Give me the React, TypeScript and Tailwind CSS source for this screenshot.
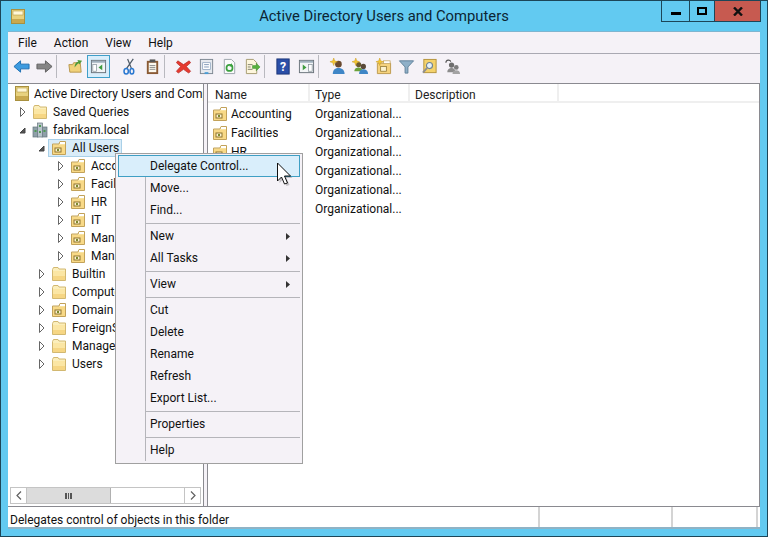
import type { ReactNode } from "react";

function Folder() {
  return (
    <svg width="16" height="16" viewBox="0 0 16 16" className="shrink-0">
      <path d="M1.5 3.5 L2.5 1.5 H7 L8 3 H14.5 V14.5 H1.5 Z" fill="#fbeebb" stroke="#d2b871" />
      <rect x="2" y="5" width="12" height="9" fill="#fbe6a4" />
      <rect x="2" y="10" width="12" height="4" fill="#f6d684" />
    </svg>
  );
}

function OuFolder() {
  return (
    <svg width="16" height="16" viewBox="0 0 16 16" className="shrink-0">
      <path d="M1.5 4 H8 L9 1.5 H14.5 V14.5 H1.5 Z" fill="#f9e3a0" stroke="#c2a25a" />
      <rect x="9" y="2" width="5" height="2" fill="#fff" />
      <rect x="2" y="5" width="12" height="9" fill="#f8d987" />
      <rect x="4" y="8" width="6" height="4" fill="#fdf3cf" stroke="#8d7430" strokeWidth="1" />
      <rect x="6" y="9" width="2" height="2" fill="#7d8a2c" />
    </svg>
  );
}

function Snapin({ size = 14 }: { size?: number }) {
  return (
    <svg width={size} height={size + 1} viewBox="0 0 14 15" className="shrink-0">
      <rect x="0.5" y="0.5" width="13" height="14" fill="#e8d27e" stroke="#a8903f" />
      <rect x="2" y="2" width="10" height="4" fill="#fff8d8" stroke="#b59c4c" strokeWidth="0.6" />
      <rect x="1" y="10" width="12" height="4" fill="#c9a94e" />
    </svg>
  );
}

function Domain() {
  return (
    <svg width="16" height="16" viewBox="0 0 16 16" className="shrink-0">
      <rect x="1" y="5" width="5" height="10" fill="#8fa0a8" stroke="#66767e" strokeWidth="0.7" />
      <rect x="10" y="5" width="5" height="10" fill="#8fa0a8" stroke="#66767e" strokeWidth="0.7" />
      <rect x="5.5" y="1" width="5" height="14" fill="#b8c4ca" stroke="#66767e" strokeWidth="0.7" />
      <rect x="7" y="3" width="2" height="2" fill="#4f9a52" />
      <rect x="2.5" y="8" width="2" height="2" fill="#4f9a52" />
      <rect x="11.5" y="8" width="2" height="2" fill="#4f9a52" />
      <rect x="7" y="9" width="2" height="2" fill="#4f9a52" />
    </svg>
  );
}

function Expander({ open }: { open?: boolean }) {
  return (
    <svg width="8" height="10" viewBox="0 0 8 10" className="shrink-0">
      {open ? (
        <path d="M1 8 H6 V3 Z" fill="#555" stroke="#444" />
      ) : (
        <path d="M1.5 0.5 L6 5 L1.5 9.5 Z" fill="#fff" stroke="#666" />
      )}
    </svg>
  );
}

function Star({ x, y }: { x: number; y: number }) {
  return (
    <path
      d={`M${x} ${y - 4} L${x + 1} ${y - 1} L${x + 4} ${y} L${x + 1} ${y + 1} L${x} ${y + 4} L${x - 1} ${y + 1} L${x - 4} ${y} L${x - 1} ${y - 1} Z`}
      fill="#f3c733"
      stroke="#c99b1e"
      strokeWidth="0.5"
    />
  );
}

function Tool({ children, active }: { children: ReactNode; active?: boolean }) {
  return (
    <div
      className={`flex h-[23px] w-[23px] items-center justify-center ${
        active ? "border border-[#3f9fc9] bg-[#d9eefb]" : ""
      }`}
    >
      <svg width="17" height="17" viewBox="0 0 18 18">
        {children}
      </svg>
    </div>
  );
}

function Sep({ hidden }: { hidden?: boolean }) {
  return (
    <div className="h-[23px] w-[8px]">
      {!hidden && <div className="h-full w-px bg-[#b9b9bf]" />}
    </div>
  );
}

const treeRows = [
  { label: "Saved Queries", pad: "pl-[11px]", kind: "folder" },
  { label: "fabrikam.local", pad: "pl-[11px]", kind: "domain", open: true },
  { label: "All Users", pad: "pl-[30px]", kind: "ou", open: true, selected: true },
  { label: "Accounting", pad: "pl-[49px]", kind: "ou" },
  { label: "Facilities", pad: "pl-[49px]", kind: "ou" },
  { label: "HR", pad: "pl-[49px]", kind: "ou" },
  { label: "IT", pad: "pl-[49px]", kind: "ou" },
  { label: "Managers", pad: "pl-[49px]", kind: "ou" },
  { label: "Management", pad: "pl-[49px]", kind: "ou" },
  { label: "Builtin", pad: "pl-[30px]", kind: "folder" },
  { label: "Computers", pad: "pl-[30px]", kind: "folder" },
  { label: "Domain Controllers", pad: "pl-[30px]", kind: "ou" },
  { label: "ForeignSecurityPrincipals", pad: "pl-[30px]", kind: "folder" },
  { label: "Managed Service Accounts", pad: "pl-[30px]", kind: "folder" },
  { label: "Users", pad: "pl-[30px]", kind: "folder" },
];

const listRows = ["Accounting", "Facilities", "HR", "IT", "Managers", "Marketing Department"];

const menuItems: { label?: string; arrow?: boolean; hot?: boolean }[] = [
  { label: "Delegate Control...", hot: true },
  { label: "Move..." },
  { label: "Find..." },
  {},
  { label: "New", arrow: true },
  { label: "All Tasks", arrow: true },
  {},
  { label: "View", arrow: true },
  {},
  { label: "Cut" },
  { label: "Delete" },
  { label: "Rename" },
  { label: "Refresh" },
  { label: "Export List..." },
  {},
  { label: "Properties" },
  {},
  { label: "Help" },
];

function ContextMenu() {
  return (
    <div className="absolute left-[114px] top-[152px] w-[188px] border border-[#a0a0a0] bg-[#f5f2f7] px-[2px] pb-[2px] pt-px">
      <div className="absolute bottom-[2px] left-[29px] top-px w-px bg-[#b5b5ba]" />
      {menuItems.map((item, i) =>
        item.label ? (
          <div
            key={i}
            className={`relative flex h-[22px] items-center pr-[10px] text-[#111] ${
              item.hot ? "border border-[#3f9fc4] bg-[#d9eefb] pl-[31px]" : "pl-[32px]"
            }`}
          >
            <span className="flex-1">{item.label}</span>
            {item.arrow && (
              <svg width="4" height="7" viewBox="0 0 4 7">
                <path d="M0 0 L4 3.5 L0 7 Z" fill="#333" />
              </svg>
            )}
          </div>
        ) : (
          <div key={i} className="flex h-[4px] items-center pl-[28px]">
            <div className="h-px w-full bg-[#b5b5ba]" />
          </div>
        ),
      )}
    </div>
  );
}

export default function App() {
  return (
    <div className="relative flex h-[537px] w-[768px] flex-col overflow-hidden border border-[#1c4658] bg-[#62caf1] text-[12px] text-[#111] [font-family:Roboto,sans-serif]">
      {/* Title bar */}
      <div className="grid h-[30px] shrink-0 grid-cols-[1fr_auto_1fr]">
        <div className="pl-[10px] pt-[8px]">
          <Snapin />
        </div>
        <div className="pt-[4px] text-[14.8px] leading-[22px] text-[#0c2533]">Active Directory Users and Computers</div>
        <div className="flex justify-end pr-[6px]">
          <div className="flex h-[21px] border border-t-0 border-[#1c4658]">
            <div className="flex w-[28px] items-center justify-center border-r border-[#1c4658] pt-[4px]">
              <div className="h-[3px] w-[10px] bg-black" />
            </div>
            <div className="flex w-[25px] items-center justify-center border-r border-[#1c4658]">
              <div className="h-[8px] w-[10px] border-2 border-black" />
            </div>
            <div className="flex w-[45px] items-center justify-center bg-[#c75a50]">
              <svg width="10" height="9" viewBox="0 0 10 9">
                <path d="M1 0.5 L9 8.5 M9 0.5 L1 8.5" stroke="#111" strokeWidth="2.4" />
              </svg>
            </div>
          </div>
        </div>
      </div>

      {/* Client area */}
      <div className="mx-[7px] flex min-h-0 flex-1 flex-col border-t border-[#7fb6d0] bg-[#f5f2f7]">
        <div className="flex h-[22px] shrink-0 items-center gap-[17px] border-b border-[#a9a9b2] pl-[10px]">
          <span>File</span>
          <span>Action</span>
          <span>View</span>
          <span>Help</span>
        </div>

        {/* Toolbar */}
        <div className="flex h-[29px] shrink-0 items-start pl-[2px] pt-px">
          <Tool>
            <path d="M1 9 L8 3 V6.5 H17 V11.5 H8 V15 Z" fill="#3d9be0" stroke="#1c6db0" />
          </Tool>
          <Tool>
            <path d="M17 9 L10 3 V6.5 H1 V11.5 H10 V15 Z" fill="#858585" stroke="#5e5e5e" />
          </Tool>
          <Sep />
          <Tool>
            <path d="M2 7 H6 L7 5 H14 L15 15 H3 Z" fill="#f1d27a" stroke="#b8974c" />
            <path d="M8 10 C8 6 10 4 12 4 L11 2 L16 3 L13 7 L12.5 5.5 C11 6 10 8 8 10 Z" fill="#4d9a3a" />
          </Tool>
          <Tool active>
            <rect x="1.5" y="2.5" width="15" height="13" fill="#f3f5f7" stroke="#69727a" />
            <rect x="2" y="3" width="14" height="2" fill="#9fb0bc" />
            <rect x="3" y="7" width="4" height="7" fill="#fff" stroke="#7d8a92" strokeWidth="0.7" />
            <path d="M13 7 L9 10 L13 13 Z" fill="#3e9b3e" />
          </Tool>
          <Sep hidden />
          <Tool>
            <path d="M13 1 L6 11 M7 1 L11 11" stroke="#4d5a66" strokeWidth="1.3" />
            <ellipse cx="5.5" cy="14" rx="2.3" ry="3" fill="none" stroke="#2a78d0" strokeWidth="1.6" />
            <ellipse cx="11.5" cy="14" rx="2" ry="3" fill="none" stroke="#2a78d0" strokeWidth="1.6" />
          </Tool>
          <Tool>
            <rect x="3" y="3" width="12" height="14" fill="#8a5a34" />
            <rect x="5" y="5" width="8" height="10" fill="#fbf8ee" />
            <rect x="6" y="1.5" width="6" height="3" fill="#555" />
            <path d="M6 8 H12 M6 10 H12 M6 12 H12" stroke="#8a8a8a" />
          </Tool>
          <Sep />
          <Tool>
            <path d="M3 3 L9 7 L15 3 L16.5 5 L12 9 L16.5 14 L14.5 16 L9 12 L3.5 16 L1.5 14 L6 9 L1.5 5 Z" fill="#e63a30" stroke="#b02620" strokeWidth="0.7" />
          </Tool>
          <Tool>
            <rect x="2.5" y="1.5" width="13" height="15" fill="#e6e9ee" stroke="#7d8791" />
            <rect x="5" y="5" width="8" height="7" fill="#fff" stroke="#7c96b5" strokeWidth="0.7" />
            <path d="M6.5 7 H11.5 M6.5 9.5 H11.5" stroke="#7c96b5" />
            <rect x="7" y="15" width="4" height="2" fill="#4a9bd3" />
          </Tool>
          <Tool>
            <path d="M3.5 1.5 H11 L14.5 5 V16.5 H3.5 Z" fill="#fbfbfb" stroke="#9ba3aa" />
            <circle cx="9" cy="10.5" r="3.2" fill="none" stroke="#3ba03e" strokeWidth="1.8" />
            <path d="M11 5.5 L13 9 L9 9 Z" fill="#3ba03e" />
          </Tool>
          <Tool>
            <path d="M2.5 1.5 H10 L13.5 5 V16.5 H2.5 Z" fill="#fdf6dc" stroke="#a59a70" />
            <path d="M4 7 H9 M4 9.5 H7 M4 12 H9" stroke="#7c7c6a" />
            <path d="M9 8 H13 V5.5 L17 9.5 L13 13.5 V11 H9 Z" fill="#59b23e" stroke="#3c8a2a" strokeWidth="0.5" />
          </Tool>
          <Sep />
          <Tool>
            <rect x="2" y="1" width="13" height="16" fill="#2b4fa8" stroke="#1c3678" />
            <text x="8.5" y="14" textAnchor="middle" fontSize="13" fontWeight="700" fill="#fff">?</text>
          </Tool>
          <Tool>
            <rect x="1.5" y="2.5" width="15" height="13" fill="#f3f5f7" stroke="#69727a" />
            <rect x="2" y="3" width="14" height="2" fill="#9fb0bc" />
            <path d="M5 7 L9 10 L5 13 Z" fill="#3e9b3e" />
            <rect x="11" y="7" width="4" height="7" fill="#fff" stroke="#7d8a92" strokeWidth="0.7" />
          </Tool>
          <Sep />
          <Tool>
            <circle cx="10" cy="6.5" r="3.5" fill="#6a4a2f" />
            <path d="M4 17 C4 12 7 10.5 10 10.5 C13 10.5 16.5 12 16.5 17 Z" fill="#3f86c6" />
            <Star x={5} y={4} />
          </Tool>
          <Tool>
            <circle cx="7" cy="7" r="2.8" fill="#6b5a30" />
            <path d="M2.5 14 C2.5 11 5 10 7 10 C9 10 11 11 11 14 Z" fill="#6aa23a" />
            <circle cx="12" cy="9" r="2.8" fill="#5a4a38" />
            <path d="M7.5 17 C7.5 13 10 12 12 12 C14 12 17 13 17 17 Z" fill="#3f86c6" />
            <Star x={4} y={4} />
          </Tool>
          <Tool>
            <path d="M2.5 5.5 H16.5 V16.5 H2.5 Z" fill="#f5d27d" stroke="#bd9a4e" />
            <rect x="9" y="3" width="7" height="3" fill="#fff" stroke="#bd9a4e" strokeWidth="0.7" />
            <rect x="6" y="9" width="6" height="5" fill="#fdf3cf" stroke="#8d7430" strokeWidth="0.8" />
            <Star x={5} y={4} />
          </Tool>
          <Tool>
            <path d="M1.5 3 H16.5 L10.5 9.5 V16 H7.5 V9.5 Z" fill="#8fb0c8" stroke="#5d7f98" />
          </Tool>
          <Tool>
            <rect x="3" y="1.5" width="13" height="14" fill="#f4d26b" stroke="#b3923b" />
            <circle cx="9" cy="8" r="3.2" fill="#e6f2fa" stroke="#6f8493" strokeWidth="1.2" />
            <path d="M6.5 10.5 L2 15.5" stroke="#8f8f8f" strokeWidth="2" />
          </Tool>
          <Tool>
            <path d="M2 5 C2 1.5 7 1.5 7 4" fill="none" stroke="#555" strokeWidth="1.2" />
            <circle cx="8" cy="7.5" r="2.8" fill="#6d6d6d" />
            <path d="M3.5 15 C3.5 11.5 6 10.5 8 10.5 C10 10.5 12 11.5 12 15 Z" fill="#8c8c8c" />
            <circle cx="13" cy="10" r="2.5" fill="#7c7c7c" />
            <path d="M9 17 C9 14 11 13 13 13 C15 13 17 14 17 17 Z" fill="#a3a3a3" />
          </Tool>
        </div>

        {/* Panes */}
        <div className="flex min-h-0 flex-1 gap-[2px] border-y border-[#8a8a90]">
          <div className="flex w-[196px] shrink-0 flex-col border-r border-[#8a8a90] bg-white">
            <div className="flex min-h-0 flex-1 flex-col overflow-hidden">
              <div className="mb-px flex h-[18px] items-center gap-[5px] whitespace-nowrap pl-[7px]">
                <Snapin />
                <span className="pt-[2px]">Active Directory Users and Computers</span>
              </div>
              {treeRows.map((row) => (
                <div key={row.label} className={`flex h-[18px] shrink-0 items-center whitespace-nowrap ${row.pad}`}>
                  <Expander open={row.open} />
                  <div
                    className={`ml-[2px] flex h-[18px] items-center gap-[5px] border px-[2px] ${
                      row.selected ? "border-[#a9d0e8] bg-[#d9ecf8]" : "border-transparent"
                    }`}
                  >
                    {row.kind === "folder" ? <Folder /> : row.kind === "ou" ? <OuFolder /> : <Domain />}
                    <span>{row.label}</span>
                  </div>
                </div>
              ))}
            </div>
            {/* Scrollbar */}
            <div className="mx-[2px] mb-[2px] flex h-[17px] shrink-0 border border-[#c4c4c4] bg-white text-[#555]">
              <div className="flex w-[16px] items-center justify-center border-r border-[#c4c4c4]">
                <svg width="6" height="9" viewBox="0 0 6 9">
                  <path d="M5 0.5 L1 4.5 L5 8.5" fill="none" stroke="#606060" strokeWidth="1.2" />
                </svg>
              </div>
              <div className="flex w-[84px] items-center justify-center border-r border-[#b0b0b0] bg-[#dcdcdc]">
                <div className="h-[6px] w-[7px] border-x-2 border-[#555] px-px">
                  <div className="mx-auto h-full w-px bg-[#555]" />
                </div>
              </div>
              <div className="flex-1" />
              <div className="flex w-[16px] items-center justify-center border-l border-[#c4c4c4]">
                <svg width="6" height="9" viewBox="0 0 6 9">
                  <path d="M1 0.5 L5 4.5 L1 8.5" fill="none" stroke="#606060" strokeWidth="1.2" />
                </svg>
              </div>
            </div>
          </div>

          <div className="ml-px min-w-0 flex-1 border-x border-[#8a8a90] bg-white">
            <div className="flex h-[19px] border-b-2 border-[#efefef] text-[#222]">
              <div className="w-[102px] border-r-2 border-[#efefef] pl-[7px] leading-[22px]">Name</div>
              <div className="w-[100px] border-r-2 border-[#efefef] pl-[5px] leading-[22px]">Type</div>
              <div className="w-[149px] border-r-2 border-[#efefef] pl-[5px] leading-[22px]">Description</div>
            </div>
            <div className="pt-px">
              {listRows.map((name) => (
                <div key={name} className="flex h-[19px] items-center">
                  <div className="flex w-[107px] items-center gap-[3px] pl-[4px] pr-[10px]">
                    <OuFolder />
                    <span className="truncate">{name}</span>
                  </div>
                  <span>Organizational...</span>
                </div>
              ))}
            </div>
          </div>
        </div>

        {/* Status bar */}
        <div className="flex h-[22px] shrink-0 items-stretch border-b-2 border-[#8fb3c6] bg-white">
          <div className="w-[530px] pl-[2px] pt-[5px] leading-[16px]">Delegates control of objects in this folder</div>
          <div className="h-full w-[133px] border-l-2 border-[#d4d4d4]" />
          <div className="h-full w-[87px] border-x-2 border-[#d4d4d4]" />
        </div>
      </div>
      <div className="h-[7px] shrink-0" />

      <ContextMenu />

      {/* Mouse pointer */}
      <svg width="17" height="25" viewBox="0 0 17 25" className="absolute left-[275px] top-[161px]">
        <path d="M2 2 V20 L6 16 L9 23 L12 22 L9 15 H15 Z" fill="#000" opacity="0.2" transform="translate(1.5 1)" />
        <path d="M1.5 1 V19 L5.5 15 L8.5 22 L11.5 21 L8.5 14 H14.5 Z" fill="#fff" stroke="#111" />
      </svg>
    </div>
  );
}
